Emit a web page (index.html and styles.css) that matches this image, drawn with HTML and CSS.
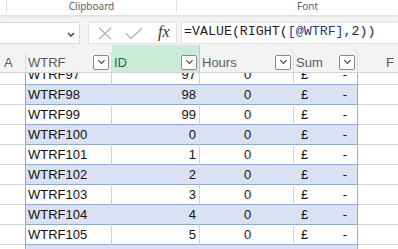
FILE: index.html
```html
<!DOCTYPE html>
<html lang="en">
<head>
    <meta charset="UTF-8">
    <meta name="viewport" content="width=device-width, initial-scale=1.0">
    <title>WTRF sheet</title>
    <link rel="stylesheet" href="styles.css">
</head>
<body>
    <div class="ribbon">
        <div class="group group-clip">Clipboard</div>
        <div class="group group-font">Font</div>
    </div>

    <div class="formula-bar">
        <div class="name-box">
            <svg class="name-drop" width="8" height="5" viewBox="0 0 8 5"><path d="M1 1 L4 4 L7 1" fill="none" stroke="#333" stroke-width="1.3"/></svg>
        </div>
        <div class="fx-box">
            <svg class="icon-x" width="14" height="13" viewBox="0 0 14 13"><path d="M1 1 L13 12 M13 1 L1 12" fill="none" stroke="#ababab" stroke-width="1.1"/></svg>
            <svg class="icon-ok" width="18" height="13" viewBox="0 0 18 13"><path d="M1 6.5 L6 11.5 L17 1" fill="none" stroke="#ababab" stroke-width="1.1"/></svg>
            <span class="fx">fx</span>
        </div>
        <div class="formula">=VALUE(RIGHT(<span class="ref">[@WTRF]</span>,2))</div>
    </div>

    <div class="sheet">
        <div class="head">
            <div class="hcell col-a">A</div>
            <div class="hcell">WTRF<span class="filter"></span></div>
            <div class="hcell selected">ID<span class="filter"></span></div>
            <div class="hcell">Hours<span class="filter"></span></div>
            <div class="hcell">Sum<span class="filter"></span></div>
            <div class="hcell col-f">F</div>
        </div>

        <div class="rows">
            <div class="rows-inner">
                <div class="row"><div class="cell col-a"></div><div class="cell">WTRF97</div><div class="cell num">97</div><div class="cell mid">0</div><div class="cell sum"><span>£</span><span>-</span></div><div class="cell col-f"></div></div>
                <div class="row band"><div class="cell col-a"></div><div class="cell">WTRF98</div><div class="cell num">98</div><div class="cell mid">0</div><div class="cell sum"><span>£</span><span>-</span></div><div class="cell col-f"></div></div>
                <div class="row"><div class="cell col-a"></div><div class="cell">WTRF99</div><div class="cell num">99</div><div class="cell mid">0</div><div class="cell sum"><span>£</span><span>-</span></div><div class="cell col-f"></div></div>
                <div class="row band"><div class="cell col-a"></div><div class="cell">WTRF100</div><div class="cell num">0</div><div class="cell mid">0</div><div class="cell sum"><span>£</span><span>-</span></div><div class="cell col-f"></div></div>
                <div class="row"><div class="cell col-a"></div><div class="cell">WTRF101</div><div class="cell num">1</div><div class="cell mid">0</div><div class="cell sum"><span>£</span><span>-</span></div><div class="cell col-f"></div></div>
                <div class="row band"><div class="cell col-a"></div><div class="cell">WTRF102</div><div class="cell num">2</div><div class="cell mid">0</div><div class="cell sum"><span>£</span><span>-</span></div><div class="cell col-f"></div></div>
                <div class="row"><div class="cell col-a"></div><div class="cell">WTRF103</div><div class="cell num">3</div><div class="cell mid">0</div><div class="cell sum"><span>£</span><span>-</span></div><div class="cell col-f"></div></div>
                <div class="row band"><div class="cell col-a"></div><div class="cell">WTRF104</div><div class="cell num">4</div><div class="cell mid">0</div><div class="cell sum"><span>£</span><span>-</span></div><div class="cell col-f"></div></div>
                <div class="row"><div class="cell col-a"></div><div class="cell">WTRF105</div><div class="cell num">5</div><div class="cell mid">0</div><div class="cell sum"><span>£</span><span>-</span></div><div class="cell col-f"></div></div>
                <div class="row band"><div class="cell col-a"></div><div class="cell">WTRF106</div><div class="cell num">6</div><div class="cell mid">0</div><div class="cell sum"><span>£</span><span>-</span></div><div class="cell col-f"></div></div>
            </div>
        </div>
    </div>
</body>
</html>
```

FILE: styles.css
```css
html, body {
    margin: 0;
    padding: 0;
}
body {
    width: 398px;
    height: 249px;
    overflow: hidden;
    background-color: #f3f3f3;
    font-family: "Liberation Sans", Arial, sans-serif;
}

/* ribbon group labels */
.ribbon {
    display: flex;
    height: 15px;
    background-color: #ffffff;
    box-shadow: 0 1px 3px rgba(0, 0, 0, 0.12);
    position: relative;
    padding-left: 6px;
}
.group {
    font-family: "Noto Sans", sans-serif;
    font-size: 10px;
    line-height: 12px;
    color: #5e5e5e;
    text-align: center;
    border-left: 1px solid #e1e1e1;
    height: 13px;
}
.group-clip {
    width: 169px;
}
.group-font {
    width: 215px;
    text-align: left;
    padding-left: 120px;
    box-sizing: border-box;
}

/* formula bar */
.formula-bar {
    display: flex;
    padding: 7px 0 1px 0;
    height: 22px;
}
.name-box {
    width: 80px;
    background-color: #ffffff;
    border: 1px solid #dadada;
    border-left: none;
    display: flex;
    align-items: center;
    justify-content: flex-end;
    padding-right: 4px;
    box-sizing: border-box;
}
.name-drop {
    margin-top: 2px;
}
.fx-box {
    margin-left: 8px;
    width: 89px;
    background-color: #ffffff;
    border: 1px solid #e2e2e2;
    box-sizing: border-box;
    display: flex;
    align-items: center;
    padding-left: 9px;
}
.icon-ok {
    margin-left: 13px;
}
.fx {
    font-family: "Liberation Serif", serif;
    font-style: italic;
    font-size: 16px;
    color: #333333;
    margin-left: 15px;
    margin-top: -2px;
}
.formula {
    margin-left: 4px;
    flex: 1;
    background-color: #ffffff;
    border: 1px solid #e2e2e2;
    border-right: none;
    box-sizing: border-box;
    font-family: "Liberation Mono", monospace;
    font-size: 13.3px;
    line-height: 18px;
    color: #1e1e1e;
    padding-left: 2px;
    white-space: nowrap;
}
.ref {
    color: #1d3b86;
}

/* grid */
.sheet {
    width: 398px;
    background-color: #ffffff;
}
.head, .row {
    display: grid;
    grid-template-columns: 26px 86px 88px 94px 64px 40px;
}
.head {
    background-color: #f3f3f3;
    height: 28px;
    box-sizing: border-box;
    padding-top: 7px;
    border-bottom: 1px solid #d4d4d4;
}
.hcell {
    display: flex;
    align-items: center;
    justify-content: space-between;
    font-size: 13px;
    color: #5b5b5b;
    padding-left: 2px;
    box-sizing: border-box;
    border-right: 1px solid #dcdcdc;
}
.hcell.selected {
    background-color: #cbebd9;
    color: #1e6c43;
    margin-top: -7px;
    padding-top: 7px;
    border-right-color: #a8d8bd;
}
.hcell.col-a {
    padding-left: 4px;
}
.hcell.col-f {
    justify-content: flex-start;
    padding-left: 28px;
    border-right: none;
}
.filter {
    width: 14px;
    height: 13px;
    border: 1px solid #8a8a8a;
    border-radius: 2px;
    background-color: #ffffff;
    margin-right: 2px;
    display: flex;
    align-items: center;
    justify-content: center;
}
.filter::after {
    content: "";
    width: 4px;
    height: 4px;
    border-right: 1.3px solid #333;
    border-bottom: 1.3px solid #333;
    transform: rotate(45deg);
    margin-top: -3px;
}

.rows {
    height: 176px;
    overflow: hidden;
}
.rows-inner {
    margin-top: -8px;
}
.row {
    height: 20px;
}
.cell {
    font-size: 13px;
    line-height: 19px;
    color: #111111;
    box-sizing: border-box;
    border-bottom: 1px solid #8ea9db;
    border-right: 1px solid #d4d4d4;
    padding-left: 2px;
    white-space: nowrap;
}
.band .cell {
    background-color: #d9e1f2;
    border-right-color: #d9e1f2;
}
.cell.col-a, .band .cell.col-a {
    background-color: #ffffff;
    border-bottom-color: #d4d4d4;
    border-right-color: #8ea9db;
}
.cell.col-f, .band .cell.col-f {
    background-color: #ffffff;
    border-bottom-color: #d4d4d4;
    border-right: none;
}
.cell.num {
    text-align: right;
    padding-right: 3px;
}
.cell.mid {
    text-align: center;
}
.cell.sum, .band .cell.sum {
    display: flex;
    justify-content: space-between;
    padding: 0 10px 0 7px;
    border-right-color: #8ea9db;
}
```
